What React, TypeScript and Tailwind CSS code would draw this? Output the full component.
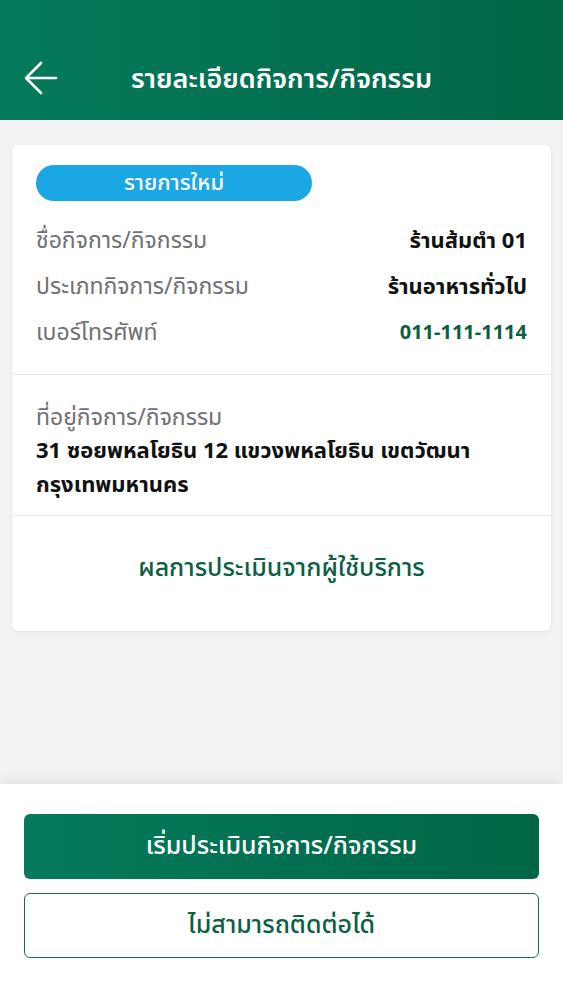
import React from "react";

const font = { fontFamily: '"Noto Sans Thai", "Noto Sans", sans-serif' };

export default function App() {
  return (
    <div className="flex min-h-[1000px] w-full flex-col bg-[#f2f2f4]" style={font}>
      <header className="relative flex h-[120px] items-end justify-center bg-gradient-to-r from-[#057b5b] to-[#006646] pb-[20px]">
        <svg className="absolute left-[24px] top-[61px]" width="34" height="34" viewBox="0 0 34 34" fill="none" stroke="white" strokeWidth="2.6" strokeLinecap="round" strokeLinejoin="round">
          <path d="M32 17H3" />
          <path d="M17 2L2 17l15 15" />
        </svg>
        <h1 className="text-[27px] font-semibold leading-[40px] text-white">รายละเอียดกิจการ/กิจกรรม</h1>
      </header>

      <main className="flex-1 px-[12px] pt-[25px]">
        <div className="rounded-[6px] bg-white shadow-[0_1px_3px_rgba(0,0,0,0.08)]">
          <div className="px-[24px] pb-[18px] pt-[20px]">
            <div className="flex h-[36px] w-[276px] items-center justify-center rounded-full bg-[#1aa7e4] text-[22px] font-medium text-white">
              รายการใหม่
            </div>
            <div className="mt-[17px] flex flex-col">
              <div className="flex h-[46px] items-center justify-between">
                <span className="text-[23px] text-[#707075]">ชื่อกิจการ/กิจกรรม</span>
                <span className="text-[22px] font-bold text-[#111]">ร้านส้มตำ 01</span>
              </div>
              <div className="flex h-[46px] items-center justify-between">
                <span className="text-[23px] text-[#707075]">ประเภทกิจการ/กิจกรรม</span>
                <span className="text-[22px] font-bold text-[#111]">ร้านอาหารทั่วไป</span>
              </div>
              <div className="flex h-[46px] items-center justify-between">
                <span className="text-[23px] text-[#707075]">เบอร์โทรศัพท์</span>
                <span className="text-[20px] font-bold text-[#0c5f43]">011-111-1114</span>
              </div>
            </div>
          </div>
          <div className="h-px bg-[#e6e6e8]" />
          <div className="px-[24px] pb-[12px] pt-[26px]">
            <div className="text-[23px] leading-[34px] text-[#707075]">ที่อยู่กิจการ/กิจกรรม</div>
            <div className="text-[22px] font-bold leading-[34px] text-[#111]">
              31 ซอยพหลโยธิน 12 แขวงพหลโยธิน เขตวัฒนา
              <br />
              กรุงเทพมหานคร
            </div>
          </div>
          <div className="h-px bg-[#e6e6e8]" />
          <div className="flex h-[115px] items-center justify-center pb-[10px]">
            <span className="text-[25px] font-medium text-[#0c5f43]">ผลการประเมินจากผู้ใช้บริการ</span>
          </div>
        </div>
      </main>

      <footer className="flex h-[216px] flex-col gap-[14px] bg-white px-[24px] pt-[30px] shadow-[0_-4px_10px_rgba(0,0,0,0.06)]">
        <button className="flex h-[65px] items-center justify-center rounded-[6px] bg-gradient-to-r from-[#057b5b] to-[#006646] text-[25px] font-medium text-white">
          เริ่มประเมินกิจการ/กิจกรรม
        </button>
        <button className="flex h-[65px] items-center justify-center rounded-[6px] border-[1.5px] border-[#1d6a52] bg-white text-[25px] font-medium text-[#0c5f43]">
          ไม่สามารถติดต่อได้
        </button>
      </footer>
    </div>
  );
}
